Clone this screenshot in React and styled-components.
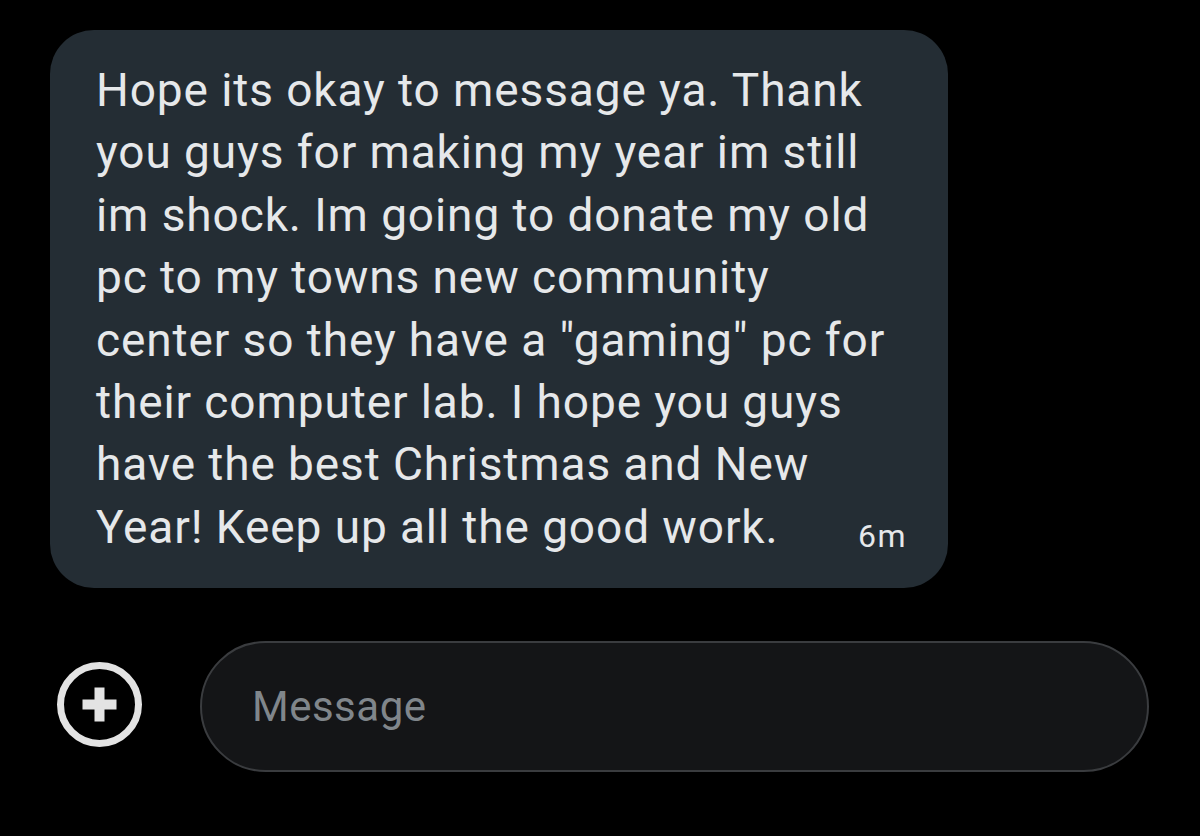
import styled, { createGlobalStyle } from "styled-components";

const Global = createGlobalStyle`
  html, body {
    margin: 0;
    background: #000;
  }
  body {
    font-family: Roboto, "Noto Sans", sans-serif;
  }
`

const Page = styled.div`
    width: 1200px;
    height: 836px;
    background: #000;
    padding-top: 30px;
    box-sizing: border-box;
`

const Bubble = styled.div`
    margin-left: 50px;
    width: 898px;
    box-sizing: border-box;
    background: #242d34;
    border-radius: 44px;
    padding: 29px 41px 30px 46px;
    color: #e6e8ea;
    font-size: 46px;
    line-height: 62.4px;
    letter-spacing: 0.9px;
`

const Line = styled.div`
    white-space: nowrap;
`

const LastLine = styled.div`
    display: flex;
    justify-content: space-between;
    align-items: flex-end;
    white-space: nowrap;
`

const Time = styled.span`
    font-size: 32px;
    line-height: 43px;
    letter-spacing: 1.5px;
    color: #e6e8ea;
`

const Composer = styled.div`
    display: flex;
    align-items: center;
    gap: 58px;
    margin: 53px 0 0 57px;
`

const PlusButton = styled.div`
    width: 85px;
    height: 85px;
    display: flex;
    align-items: center;
    justify-content: center;
    margin-top: -4px;
`

const Input = styled.div`
    width: 949px;
    height: 131px;
    box-sizing: border-box;
    border: 2px solid #3a3c3f;
    border-radius: 66px;
    background: #141517;
    display: flex;
    align-items: center;
    padding-left: 50px;
    color: #80868b;
    font-size: 42px;
    letter-spacing: 0.5px;
`

const lines = [
    "Hope its okay to message ya. Thank",
    "you guys for making my year im still",
    "im shock. Im going to donate my old",
    "pc to my towns new community",
    "center so they have a \"gaming\" pc for",
    "their computer lab. I hope you guys",
    "have the best Christmas and New",
]

const App = () => {
  return (
    <>
        <Global />
        <Page>
            <Bubble>
                {lines.map((l) => <Line key={l}>{l}</Line>)}
                <LastLine>
                    <span>Year! Keep up all the good work.</span>
                    <Time>6m</Time>
                </LastLine>
            </Bubble>
            <Composer>
                <PlusButton>
                    <svg width="85" height="85" viewBox="0 0 85 85">
                        <circle cx="42.5" cy="42.5" r="39" fill="none" stroke="#e3e3e3" strokeWidth="7" />
                        <rect x="25.5" y="37.5" width="34" height="10" fill="#e3e3e3" />
                        <rect x="37.5" y="25.5" width="10" height="34" fill="#e3e3e3" />
                    </svg>
                </PlusButton>
                <Input>Message</Input>
            </Composer>
        </Page>
    </>
  )
}

export default App
